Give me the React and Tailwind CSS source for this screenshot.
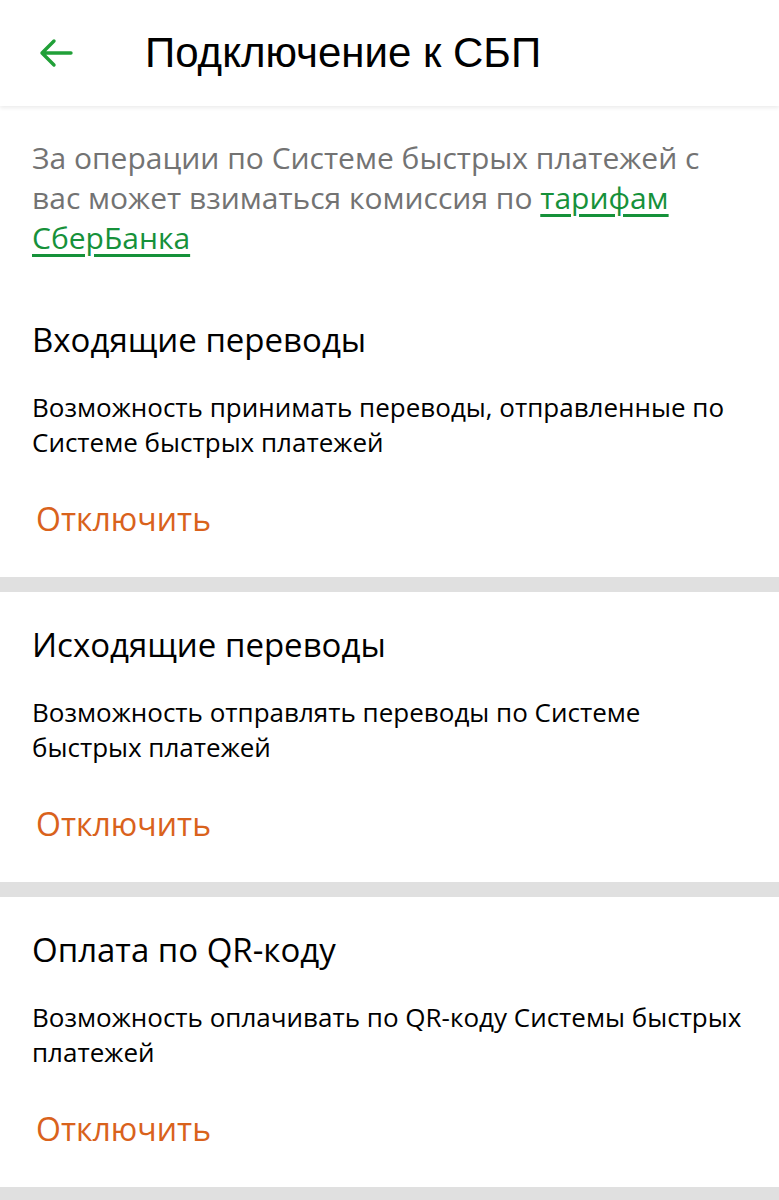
const sans = { fontFamily: '"Open Sans", "Noto Sans", sans-serif' };
const head = { fontFamily: '"Liberation Sans", Arial, sans-serif' };

const sections = [
  {
    title: "Входящие переводы",
    text: "Возможность принимать переводы, отправленные по Системе быстрых платежей",
  },
  {
    title: "Исходящие переводы",
    text: "Возможность отправлять переводы по Системе быстрых платежей",
  },
  {
    title: "Оплата по QR-коду",
    text: "Возможность оплачивать по QR-коду Системы быстрых платежей",
  },
];

const ArrowBack = () => (
  <svg width="34" height="30" viewBox="0 0 34 30" fill="none">
    <path d="M32 15H3M15 3L3 15l12 12" stroke="#21a038" strokeWidth="3.4" strokeLinecap="round" strokeLinejoin="round" />
  </svg>
);

export default function App() {
  return (
    <div className="min-h-screen bg-white" style={sans}>
      <header className="relative z-10 flex h-[106px] items-center bg-white shadow-[0_2px_4px_rgba(0,0,0,0.08)]">
        <button className="ml-[39px] flex h-10 w-[34px] items-center">
          <ArrowBack />
        </button>
        <h1 className="ml-[72px] text-[42px] leading-none text-black" style={head}>
          Подключение к СБП
        </h1>
      </header>

      <p className="px-8 pt-[32px] text-[30px] leading-[40px] text-[#737373]">
        За операции по Системе быстрых платежей с вас может взиматься комиссия по{" "}
        <a className="text-[#16913a] underline underline-offset-[5px]">тарифам СберБанка</a>
      </p>

      <div className="pt-[29px]">
        {sections.map((s) => (
          <div key={s.title}>
            <section className="h-[290px] px-8 pt-[33px]">
              <h2 className="text-[33px] leading-[40px] text-black">{s.title}</h2>
              <p className="mt-[30px] text-[26px] font-medium leading-[35px] text-black">{s.text}</p>
              <button className="mt-[39px] px-1 text-[32px] font-medium leading-[40px] text-[#d9621c]">
                Отключить
              </button>
            </section>
            <div className="h-[15px] bg-[#e0e0e0]" />
          </div>
        ))}
      </div>
    </div>
  );
}
